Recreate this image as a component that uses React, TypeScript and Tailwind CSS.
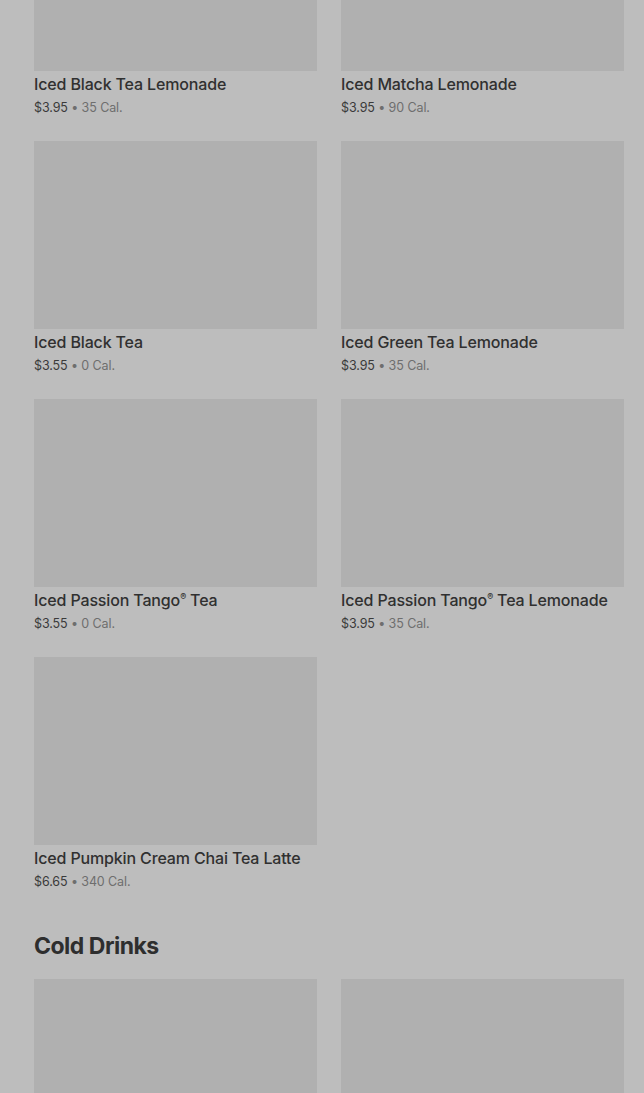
import React from 'react';

type Item = { name: string; price: string; cal: string };

const icedTeas: Item[] = [
  { name: 'Iced Black Tea Lemonade', price: '$3.95', cal: '35 Cal.' },
  { name: 'Iced Matcha Lemonade', price: '$3.95', cal: '90 Cal.' },
  { name: 'Iced Black Tea', price: '$3.55', cal: '0 Cal.' },
  { name: 'Iced Green Tea Lemonade', price: '$3.95', cal: '35 Cal.' },
  { name: 'Iced Passion Tango® Tea', price: '$3.55', cal: '0 Cal.' },
  { name: 'Iced Passion Tango® Tea Lemonade', price: '$3.95', cal: '35 Cal.' },
  { name: 'Iced Pumpkin Cream Chai Tea Latte', price: '$6.65', cal: '340 Cal.' },
];

function ProductCard({ item }: { item?: Item }) {
  return (
    <div className="flex flex-col">
      <div className="h-[188px] w-full bg-[#b0b0b0]" />
      {item && (
        <div>
          <div className="text-[16px] leading-[26px] font-medium tracking-[-0.15px] text-[#303030] whitespace-nowrap">
            {item.name.split('®').map((part, i, arr) => (
              <React.Fragment key={i}>
                {part}
                {i < arr.length - 1 && <sup className="text-[9px] -top-[6px]">®</sup>}
              </React.Fragment>
            ))}
          </div>
          <div className="pt-[1px] text-[12.5px] leading-[20px] tracking-[-0.1px] text-[#3a3a3a]">
            {item.price}
            <span className="text-[#6e6e6e]"> • {item.cal}</span>
          </div>
        </div>
      )}
    </div>
  );
}

export default function App() {
  return (
    <div
      className="h-[1093px] overflow-hidden bg-[#bdbdbd]"
      style={{ fontFamily: 'Inter, "Noto Sans", sans-serif' }}
    >
      <div className="pl-[34px] pr-[20px] -mt-[117px]">
        {/* Iced Teas */}
        <div className="grid grid-cols-2 gap-x-[24px] gap-y-[23px]">
          {icedTeas.map((item) => (
            <ProductCard key={item.name} item={item} />
          ))}
        </div>

        {/* Cold Drinks */}
        <h2 className="mt-[40px] mb-[19px] text-[23px] leading-[28px] font-bold tracking-[-0.5px] text-[#2e2e2e]">
          Cold Drinks
        </h2>
        <div className="grid grid-cols-2 gap-x-[24px] gap-y-[23px]">
          <ProductCard />
          <ProductCard />
        </div>
      </div>
    </div>
  );
}
